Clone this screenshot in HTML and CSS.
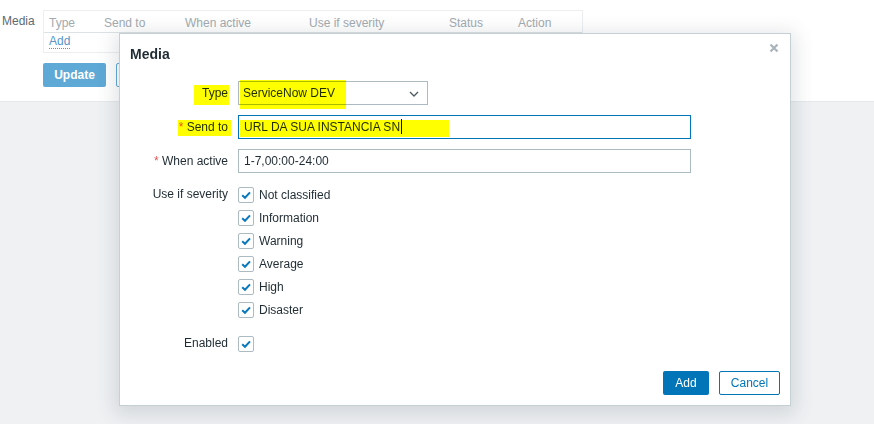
FILE: index.html
```html
<!DOCTYPE html>
<html>
<head>
<meta charset="utf-8">
<link rel="stylesheet" href="styles.css">
</head>
<body>
<div class="page-top">
  <div class="media-row">
    <div class="media-label">Media</div>
    <div class="media-table">
      <div class="thead">
        <span>Type</span><span>Send to</span><span>When active</span><span>Use if severity</span><span>Status</span><span>Action</span>
      </div>
      <div class="tbody"><a class="link-add">Add</a></div>
    </div>
  </div>
  <div class="page-buttons">
    <span class="btn-update">Update</span>
    <span class="btn-outline">Clone</span>
  </div>
</div>
<div class="page-rest"></div>

<div class="dialog">
  <div class="dialog-head">
    <h4 class="dialog-title">Media</h4>
    <span class="dialog-close"><svg width="10" height="10" viewBox="0 0 10 10"><path d="M1.5 1.5 L8.5 8.5 M8.5 1.5 L1.5 8.5" stroke="#a9b4ba" stroke-width="2.2"/></svg></span>
  </div>
  <div class="form">
    <div class="row">
      <label class="lbl"><span class="hl hl-type">Type</span></label>
      <div class="field">
        <div class="select"><span class="hl hl-sel">ServiceNow DEV</span>
          <svg class="chev" width="10" height="6" viewBox="0 0 10 6"><path d="M1 1 L5 5 L9 1" fill="none" stroke="#4f5a60" stroke-width="1.3"/></svg>
        </div>
      </div>
    </div>
    <div class="row">
      <label class="lbl"><span class="hl hl-send"><span class="req">*</span> Send to</span></label>
      <div class="field">
        <div class="input focused"><span class="hl hl-url">URL DA SUA INSTANCIA SN<span class="caret"></span></span></div>
      </div>
    </div>
    <div class="row">
      <label class="lbl"><span class="req">*</span> When active</label>
      <div class="field">
        <div class="input">1-7,00:00-24:00</div>
      </div>
    </div>
    <div class="row">
      <label class="lbl lbl-list">Use if severity</label>
      <div class="field checklist">
        <div class="check"><span class="box"><svg width="14" height="14" viewBox="0 0 14 14"><path d="M3.2 7.2 L6 9.8 L11 4.4" fill="none" stroke="#0a78bb" stroke-width="2"/></svg></span>Not classified</div>
        <div class="check"><span class="box"><svg width="14" height="14" viewBox="0 0 14 14"><path d="M3.2 7.2 L6 9.8 L11 4.4" fill="none" stroke="#0a78bb" stroke-width="2"/></svg></span>Information</div>
        <div class="check"><span class="box"><svg width="14" height="14" viewBox="0 0 14 14"><path d="M3.2 7.2 L6 9.8 L11 4.4" fill="none" stroke="#0a78bb" stroke-width="2"/></svg></span>Warning</div>
        <div class="check"><span class="box"><svg width="14" height="14" viewBox="0 0 14 14"><path d="M3.2 7.2 L6 9.8 L11 4.4" fill="none" stroke="#0a78bb" stroke-width="2"/></svg></span>Average</div>
        <div class="check"><span class="box"><svg width="14" height="14" viewBox="0 0 14 14"><path d="M3.2 7.2 L6 9.8 L11 4.4" fill="none" stroke="#0a78bb" stroke-width="2"/></svg></span>High</div>
        <div class="check"><span class="box"><svg width="14" height="14" viewBox="0 0 14 14"><path d="M3.2 7.2 L6 9.8 L11 4.4" fill="none" stroke="#0a78bb" stroke-width="2"/></svg></span>Disaster</div>
      </div>
    </div>
    <div class="row row-enabled">
      <label class="lbl lbl-list">Enabled</label>
      <div class="field checklist">
        <div class="check"><span class="box"><svg width="14" height="14" viewBox="0 0 14 14"><path d="M3.2 7.2 L6 9.8 L11 4.4" fill="none" stroke="#0a78bb" stroke-width="2"/></svg></span></div>
      </div>
    </div>
  </div>
  <div class="dialog-foot">
    <span class="btn-add">Add</span>
    <span class="btn-cancel">Cancel</span>
  </div>
</div>
</body>
</html>
```

FILE: styles.css
```css
* { box-sizing: border-box; }
html, body { margin: 0; padding: 0; }
body {
  font-family: "Liberation Sans", Arial, sans-serif;
  font-size: 12px;
  color: #1f2c33;
  background: #eff1f3;
  width: 874px;
  height: 424px;
  overflow: hidden;
  position: relative;
}
.page-top {
  background: #fff;
  height: 102px;
  border-bottom: 1px solid #e6e9eb;
  padding-top: 10px;
}
.media-row { display: flex; }
.media-label {
  width: 43px;
  padding-left: 2px;
  padding-top: 4px;
  color: #5d6a72;
}
.media-table {
  width: 540px;
  height: 43px;
  border: 1px solid #eceef0;
}
.thead {
  display: grid;
  grid-template-columns: 55px 81px 124px 140px 69px 1fr;
  height: 22px;
  border-bottom: 1px solid #dde2e5;
  padding-left: 5px;
  align-items: center;
  color: #a2aab0;
}
.thead span { line-height: 20px; padding-top: 2px; }
.tbody { padding: 0 0 0 5px; line-height: 14px; padding-top: 1px; }
.link-add {
  color: #5794c9;
  border-bottom: 1px dotted #5794c9;
}
.page-buttons {
  display: flex;
  gap: 10px;
  padding: 10px 0 0 43px;
}
.btn-update {
  width: 63px;
  height: 24px;
  background: #5fa9d7;
  color: #fff;
  border-radius: 2px;
  font-weight: bold;
  display: flex;
  align-items: center;
  justify-content: center;
}
.btn-outline {
  width: 60px;
  height: 24px;
  border: 1px solid #5fa9d7;
  border-radius: 2px;
  color: #5fa9d7;
  display: flex;
  align-items: center;
  justify-content: center;
}

.dialog {
  position: absolute;
  left: 119px;
  top: 33px;
  width: 672px;
  height: 373px;
  background: #fff;
  border: 1px solid #c5d0d5;
  box-shadow: 0 4px 18px 4px rgba(60, 75, 85, 0.16);
  display: flex;
  flex-direction: column;
  z-index: 5;
}
.dialog-head {
  display: flex;
  justify-content: space-between;
  padding: 10px 10px 0 10px;
  height: 40px;
}
.dialog-title {
  margin: 0;
  font-size: 14px;
  line-height: 20px;
  font-weight: bold;
  color: #1f2c33;
}
.dialog-close {
  display: block;
  margin-top: -1px;
  margin-right: 1px;
  line-height: 0;
}
.form {
  display: flex;
  flex-direction: column;
  gap: 10px;
  padding-top: 7px;
  flex: 1;
}
.row { display: flex; gap: 10px; }
.row-enabled { margin-top: 1px; }
.lbl {
  width: 108px;
  text-align: right;
  line-height: 24px;
  flex: none;
  white-space: nowrap;
}
.lbl-list { line-height: 23px; }
.req { color: #e45959; }
.field { flex: none; }
.select {
  width: 190px;
  height: 24px;
  border: 1px solid #acbbc2;
  padding-left: 4px;
  line-height: 22px;
  display: flex;
  align-items: center;
  justify-content: space-between;
  padding-right: 8px;
}
.chev { display: block; margin-top: 1px; }
.input {
  width: 453px;
  height: 24px;
  border: 1px solid #acbbc2;
  padding-left: 5px;
  line-height: 22px;
}
.input.focused { border-color: #0275b8; }
.hl { position: relative; }
.hl::after {
  content: "";
  position: absolute;
  background: #ffff00;
  mix-blend-mode: multiply;
}
.hl-type::after { left: -8px; right: -1px; top: -1px; bottom: -5px; }
.hl-sel::after { left: -3px; right: -11px; top: -2px; bottom: -5px; }
.hl-send::after { left: -1px; right: -3px; top: 0; bottom: -2px; }
.hl-url::after { left: -4px; right: -47px; top: 0; bottom: -3px; }
.caret {
  display: inline-block;
  width: 1px;
  height: 15px;
  background: #111;
  vertical-align: -3px;
  margin-left: 1px;
}
.checklist { display: flex; flex-direction: column; }
.check {
  display: flex;
  align-items: center;
  height: 23px;
  gap: 5px;
}
.box {
  width: 16px;
  height: 16px;
  border: 1px solid #acbbc2;
  border-radius: 2px;
  display: flex;
  align-items: center;
  justify-content: center;
}
.box svg { display: block; }
.dialog-foot {
  display: flex;
  justify-content: flex-end;
  gap: 10px;
  padding: 0 10px 10px 0;
}
.btn-add {
  width: 46px;
  height: 24px;
  background: #0275b8;
  color: #fff;
  border-radius: 2px;
  display: flex;
  align-items: center;
  justify-content: center;
}
.btn-cancel {
  width: 61px;
  height: 24px;
  border: 1px solid #0275b8;
  color: #0275b8;
  border-radius: 2px;
  display: flex;
  align-items: center;
  justify-content: center;
}
```
